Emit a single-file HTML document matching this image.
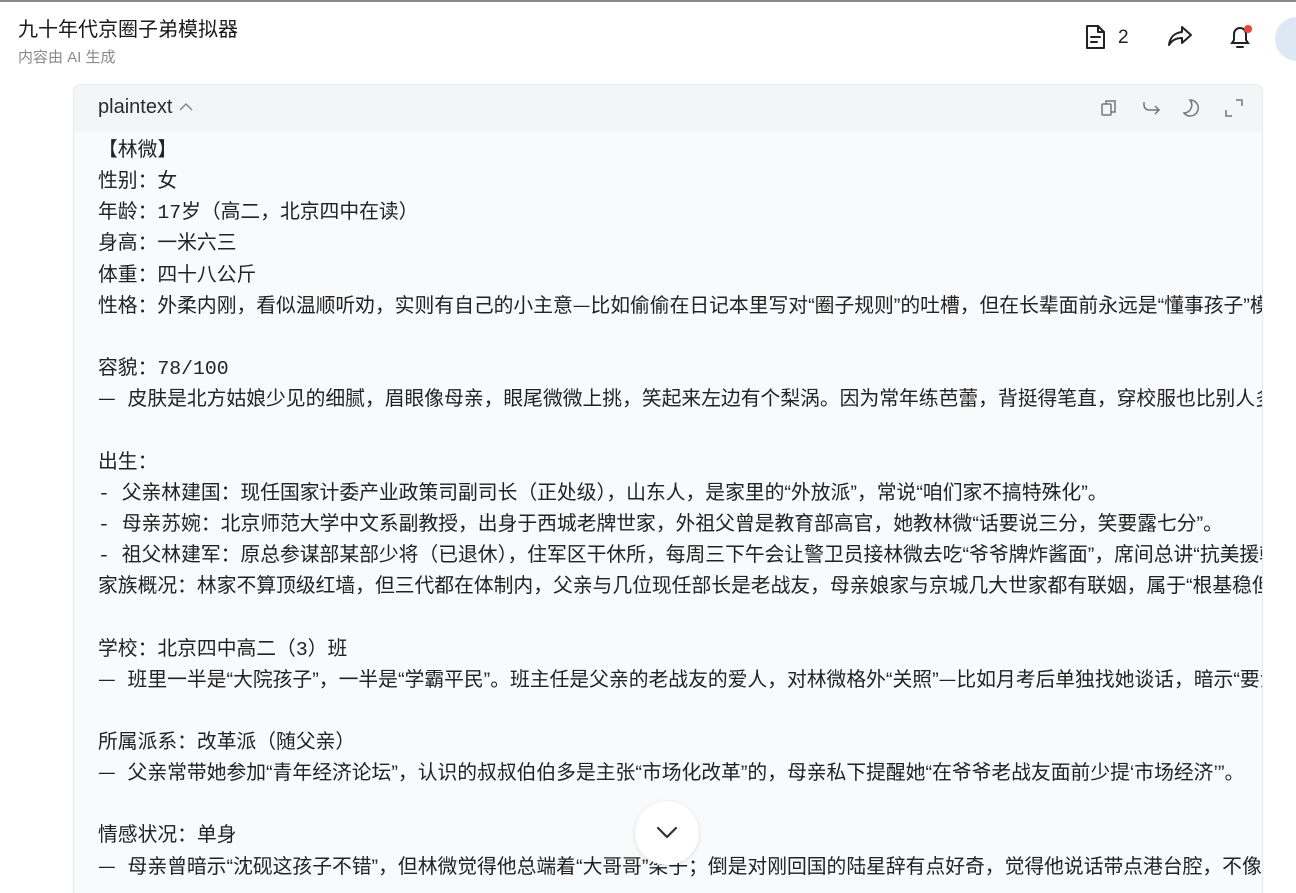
<!DOCTYPE html>
<html><head><meta charset="utf-8">
<style>
html,body{margin:0;padding:0;background:#fff;width:1296px;height:893px;overflow:hidden;}
body{font-family:"Liberation Sans","Noto Sans CJK SC",sans-serif;color:#1f1f1f;position:relative;}
.topline{position:absolute;left:0;top:0;width:1296px;height:2px;background:#8a8a8a;}
.title{position:absolute;left:18px;top:13px;font-size:20px;color:#1a1a1a;}
.sub{position:absolute;left:18px;top:46px;font-size:15px;color:#8a8a8a;}
.icons{position:absolute;top:24px;}
.avatar{position:absolute;left:1275px;top:17px;width:44px;height:44px;border-radius:50%;background:#dde8f5;}
.block{position:absolute;left:73px;top:84px;width:1188px;height:830px;border:1px solid #e6e8eb;border-radius:8px;background:#f9fafb;overflow:hidden;}
.head{height:46px;background:#f4f5f7;position:relative;}
.head .lang{position:absolute;left:24px;top:11px;font-size:20px;color:#2a2a2a;}
.code{position:absolute;left:24px;top:51px;right:0;font-family:"Liberation Mono","Noto Sans CJK SC",monospace;font-size:19.8px;white-space:pre;color:#222;overflow:hidden;}
.code div{height:31.17px;line-height:31.17px;overflow:visible;}
.code span{font-family:"Liberation Sans","Noto Sans CJK SC",sans-serif;line-height:0;}
.code b{font-weight:normal;font-family:"Noto Sans CJK SC",sans-serif;line-height:0;}
.down{position:absolute;left:635px;top:801px;width:64px;height:64px;border-radius:50%;background:#fff;box-shadow:0 1px 4px rgba(0,0,0,0.12);}
</style></head><body>
<div class="topline"></div>
<div class="title">九十年代京圈子弟模拟器</div>
<div class="sub">内容由 AI 生成</div>

<svg class="icons" style="left:1084px" width="24" height="26" viewBox="0 0 24 26" fill="none" stroke="#222" stroke-width="2" stroke-linejoin="round" stroke-linecap="round"><path d="M3 2h11l6 6v16H3z"/><path d="M14 2v6h6"/><path d="M7 13h9M7 18h6"/></svg>
<div style="position:absolute;left:1118px;top:27px;font-size:19px;color:#222;">2</div>
<svg class="icons" style="left:1166px" width="28" height="26" viewBox="0 0 28 26" fill="none" stroke="#222" stroke-width="2" stroke-linejoin="round"><path d="M16 3l9 8-9 8v-5c-6 0-10 2-13 7 1-8 5-12 13-13z"/></svg>
<svg class="icons" style="left:1226px;top:22px" width="30" height="30" viewBox="0 0 30 30" fill="none" stroke="#222" stroke-width="2" stroke-linecap="round"><path d="M6 21h16l-2-3v-6a6 6 0 0 0-12 0v6z"/><path d="M11 25h6"/><circle cx="22" cy="7" r="4" fill="#f0433a" stroke="none"/></svg>
<div class="avatar"></div>

<div class="block">
 <div class="head">
  <div class="lang">plaintext <svg width="16" height="12" viewBox="0 0 16 12" fill="none" stroke="#888" stroke-width="1.5"><path d="M2 9l6-6 6 6"/></svg></div>
  <svg style="position:absolute;left:1026px;top:14px" width="18" height="18" viewBox="0 0 18 18" fill="none" stroke="#777" stroke-width="1.5"><rect x="2" y="5" width="9" height="11" rx="1"/><path d="M6 5V2h9v11h-4"/></svg>
  <svg style="position:absolute;left:1068px;top:14px" width="20" height="18" viewBox="0 0 20 18" fill="none" stroke="#777" stroke-width="1.5"><path d="M2 3v3a5 5 0 0 0 5 5h10M13 7l4 4-4 4"/></svg>
  <svg style="position:absolute;left:1108px;top:13px" width="18" height="20" viewBox="0 0 18 20" fill="none" stroke="#777" stroke-width="1.5"><path d="M8 2a8 8 0 1 1-6 13 8 8 0 0 0 6-13z"/></svg>
  <svg style="position:absolute;left:1150px;top:13px" width="20" height="20" viewBox="0 0 20 20" fill="none" stroke="#777" stroke-width="1.5"><path d="M12 2h6v6M8 18H2v-6"/></svg>
 </div>
 <div class="code"><div>【林微】</div><div>性别：女</div><div>年龄：17岁（高二，北京四中在读）</div><div>身高：一米六三</div><div>体重：四十八公斤</div><div>性格：外柔内刚，看似温顺听劝，实则有自己的小主意<b>—</b>比如偷偷在日记本里写对<span>“</span>圈子规则<span>”</span>的吐槽，但在长辈面前永远是<span>“</span>懂事孩子<span>”</span>模样。</div><div></div><div>容貌：78/100</div><div><b>—</b> 皮肤是北方姑娘少见的细腻，眉眼像母亲，眼尾微微上挑，笑起来左边有个梨涡。因为常年练芭蕾，背挺得笔直，穿校服也比别人多几分精神。</div><div></div><div>出生：</div><div>- 父亲林建国：现任国家计委产业政策司副司长（正处级），山东人，是家里的<span>“</span>外放派<span>”</span>，常说<span>“</span>咱们家不搞特殊化<span>”</span>。</div><div>- 母亲苏婉：北京师范大学中文系副教授，出身于西城老牌世家，外祖父曾是教育部高官，她教林微<span>“</span>话要说三分，笑要露七分<span>”</span>。</div><div>- 祖父林建军：原总参谋部某部少将（已退休），住军区干休所，每周三下午会让警卫员接林微去吃<span>“</span>爷爷牌炸酱面<span>”</span>，席间总讲<span>“</span>抗美援朝<span>”</span>的故事。</div><div>家族概况：林家不算顶级红墙，但三代都在体制内，父亲与几位现任部长是老战友，母亲娘家与京城几大世家都有联姻，属于<span>“</span>根基稳但不张扬<span>”</span>的人家。</div><div></div><div>学校：北京四中高二（3）班</div><div><b>—</b> 班里一半是<span>“</span>大院孩子<span>”</span>，一半是<span>“</span>学霸平民<span>”</span>。班主任是父亲的老战友的爱人，对林微格外<span>“</span>关照<span>”</span><b>—</b>比如月考后单独找她谈话，暗示<span>“</span>要注意影响<span>”</span>。</div><div></div><div>所属派系：改革派（随父亲）</div><div><b>—</b> 父亲常带她参加<span>“</span>青年经济论坛<span>”</span>，认识的叔叔伯伯多是主张<span>“</span>市场化改革<span>”</span>的，母亲私下提醒她<span>“</span>在爷爷老战友面前少提<span>‘</span>市场经济<span>’</span><span>”</span>。</div><div></div><div>情感状况：单身</div><div><b>—</b> 母亲曾暗示<span>“</span>沈砚这孩子不错<span>”</span>，但林微觉得他总端着<span>“</span>大哥哥<span>”</span>架子；倒是对刚回国的陆星辞有点好奇，觉得他说话带点港台腔，不像大院里的人。</div></div>
</div>
<div class="down"><svg style="position:absolute;left:20px;top:24px" width="24" height="16" viewBox="0 0 24 16" fill="none" stroke="#333" stroke-width="2.2" stroke-linecap="round" stroke-linejoin="round"><path d="M3 3l9 9 9-9"/></svg></div>
</body></html>
